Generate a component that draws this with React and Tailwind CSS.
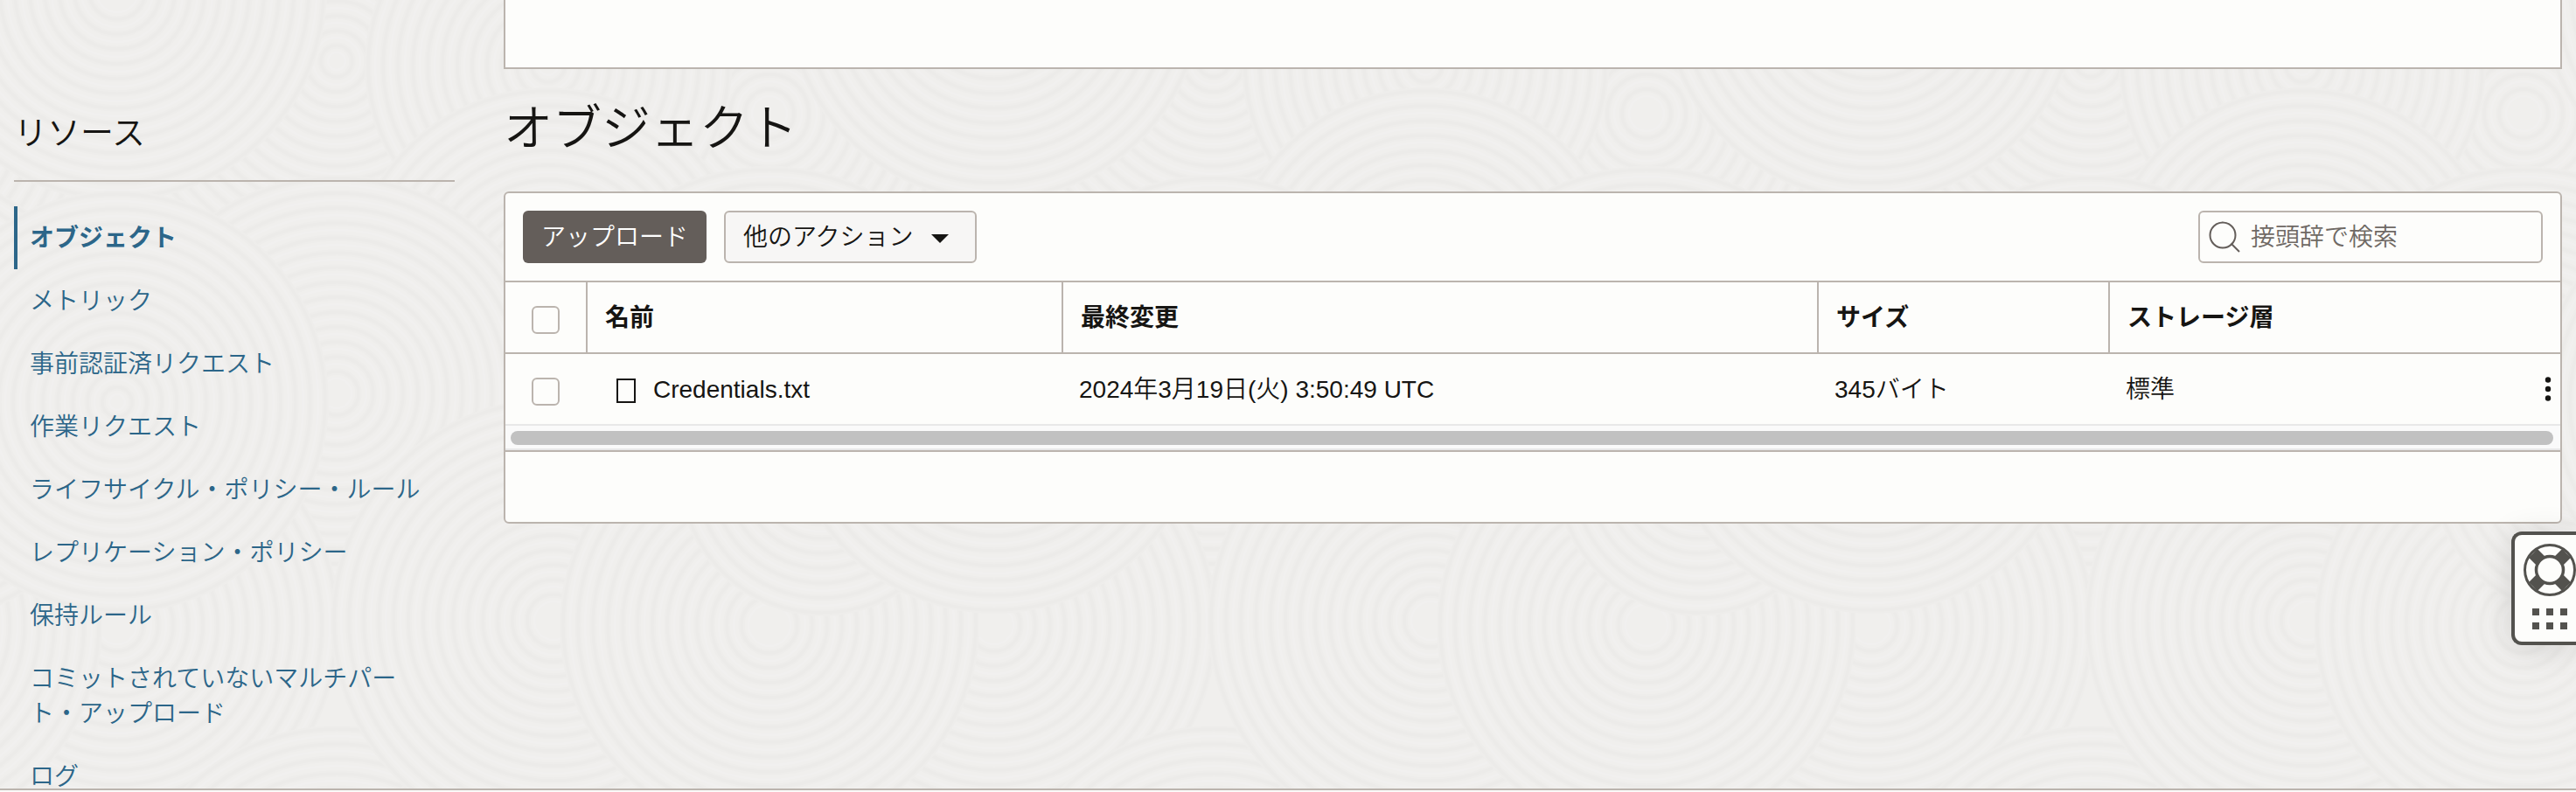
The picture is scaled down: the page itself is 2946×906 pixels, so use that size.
import React from "react";

const TILE = 1003;
const PITCH = 17;

// Discs of the sand-garden texture, painted in order: [cx, cy, radius]
const DISCS = [
  [385, 70, 260],
  [880, 130, 270],
  [627, 75, 210],
  [134, -10, 240],
  [627, 330, 230],
  [880, 450, 260],
  [385, 450, 250],
  [134, 715, 255],
  [385, 1080, 250],
  [633, 1080, 250],
  [134, 1110, 200],
  [633, 710, 255],
  [880, 715, 240],
  [940, 540, 165],
  [134, 460, 242],
  [880, 1110, 190],
];

function Rings({ cx, cy, r }) {
  const radii = [];
  for (let i = r - 4; i > 16; i -= PITCH) radii.push(i);
  return (
    <g>
      <circle cx={cx} cy={cy} r={r} fill="#f0efed" />
      {radii.map((n) => (
        <g key={n} fill="none">
          <circle cx={cx} cy={cy} r={n} stroke="#eeedeb" strokeWidth="7" />
          <circle cx={cx} cy={cy} r={n} stroke="#ecebe9" strokeWidth="3" />
          <circle cx={cx} cy={cy} r={n - 8} stroke="#f1f0ef" strokeWidth="3" />
        </g>
      ))}
    </g>
  );
}

function Texture() {
  return (
    <svg className="absolute inset-0 -z-10 h-full w-full" aria-hidden="true">
      <defs>
        <pattern id="sand" width={TILE} height="920" patternUnits="userSpaceOnUse">
          <rect width={TILE} height="920" fill="#f0efed" />
          {DISCS.map(([cx, cy, r]) =>
            [-TILE, 0, TILE].map((dx) => <Rings key={`${cx}-${cy}-${dx}`} cx={cx + dx} cy={cy} r={r} />)
          )}
        </pattern>
      </defs>
      <rect width="100%" height="100%" fill="url(#sand)" />
    </svg>
  );
}

const LINKS = [
  "オブジェクト",
  "メトリック",
  "事前認証済リクエスト",
  "作業リクエスト",
  "ライフサイクル・ポリシー・ルール",
  "レプリケーション・ポリシー",
  "保持ルール",
  "コミットされていないマルチパート・アップロード",
  "ログ",
];

function Sidebar() {
  return (
    <nav aria-label="リソース" className="w-[504px] shrink-0 pt-[124px]">
      <h2 className="border-b-2 border-[#bbb4ae] pb-[26px] text-[38px] leading-[56px] text-[#161513]">リソース</h2>
      <ul className="mt-7">
        {LINKS.map((label, i) => (
          <li key={label}>
            <a
              href="#"
              aria-current={i === 0 ? "page" : undefined}
              className={
                i === 0
                  ? "block border-l-4 border-[#2c6689] pt-[17px] pr-8 pb-[15px] pl-[14px] font-bold text-[#2c6689]"
                  : "block border-l-4 border-transparent pt-[17px] pr-8 pb-[15px] pl-[14px] text-[#2c6689]"
              }
            >
              {label}
            </a>
          </li>
        ))}
      </ul>
    </nav>
  );
}

function Check({ label }) {
  return (
    <input
      type="checkbox"
      aria-label={label}
      className="mt-[6px] block size-8 appearance-none rounded-md border-2 border-[#bbb4ae] bg-[#fdfdfb]"
    />
  );
}

function Toolbar() {
  return (
    <div className="flex items-center justify-between border-b-2 border-[#bbb4ae] p-5">
      <div className="flex gap-5">
        <button type="button" className="h-[60px] rounded-md bg-[#645e5a] px-[21px] pt-0.5 text-white">
          アップロード
        </button>
        <button
          type="button"
          aria-haspopup="menu"
          className="flex h-[60px] items-center gap-5 rounded-md border-2 border-[#bbb4ae] bg-[#f7f6f5] pt-0.5 pr-[30px] pl-5"
        >
          他のアクション
          <svg width="20" height="10" viewBox="0 0 20 10" className="mt-0.5" aria-hidden="true">
            <path d="M0 0h20L10 10z" fill="#161513" />
          </svg>
        </button>
      </div>
      <label className="flex h-[60px] w-[394px] items-center gap-2.5 rounded-md border-2 border-[#bbb4ae] pr-4 pl-2.5">
        <svg width="38" height="38" viewBox="0 0 38 38" fill="none" stroke="#645e5a" strokeWidth="2" aria-hidden="true">
          <circle cx="16" cy="17" r="14.500" />
          <path d="M25.500 26.500l9.500 9.500" />
        </svg>
        <input
          type="text"
          aria-label="接頭辞で検索"
          placeholder="接頭辞で検索"
          className="min-w-0 flex-1 bg-transparent pt-0.5 outline-none placeholder:text-[#6f6964]"
        />
      </label>
    </div>
  );
}

function ObjectTable() {
  const head = "h-[82px] border-b-2 border-l-2 border-[#bbb4ae] pt-0.5 pl-5 text-left font-bold";
  const cell = "h-20 pt-0.5 pl-5";
  return (
    <table className="w-full table-fixed border-separate border-spacing-0">
      <colgroup>
        <col className="w-[92px]" />
        <col className="w-[544px]" />
        <col className="w-[864px]" />
        <col className="w-[333px]" />
        <col />
        <col className="w-[60px]" />
      </colgroup>
      <thead>
        <tr>
          <th className="border-b-2 border-[#bbb4ae] pl-[30px]">
            <Check label="すべて選択" />
          </th>
          <th className={head}>名前</th>
          <th className={head}>最終変更</th>
          <th className={head}>サイズ</th>
          <th className={head}>ストレージ層</th>
          <td className="border-b-2 border-[#bbb4ae]" />
        </tr>
      </thead>
      <tbody>
        <tr>
          <td className="pl-[30px]">
            <Check label="Credentials.txt を選択" />
          </td>
          <td className={cell}>
            <div className="flex items-center gap-5 pl-[15px]">
              <svg width="22" height="28" viewBox="0 0 22 28" className="mt-0.5" aria-hidden="true">
                <rect x="1" y="1" width="20" height="26" fill="none" stroke="#161513" strokeWidth="2" />
              </svg>
              Credentials.txt
            </div>
          </td>
          <td className={cell}>2024年3月19日(火) 3:50:49 UTC</td>
          <td className={cell}>345バイト</td>
          <td className={cell}>標準</td>
          <td className="h-20 pr-2.5">
            <button type="button" aria-label="アクション" className="ml-auto block">
              <svg width="8" height="28" viewBox="0 0 8 28" fill="#161513" aria-hidden="true">
                <circle cx="4" cy="3.500" r="3.200" />
                <circle cx="4" cy="14" r="3.200" />
                <circle cx="4" cy="24.500" r="3.200" />
              </svg>
            </button>
          </td>
        </tr>
      </tbody>
    </table>
  );
}

function HelpWidget() {
  return (
    <button
      type="button"
      aria-label="ヘルプ"
      className="absolute top-[608px] right-0 flex h-[130px] w-[74px] flex-col items-center gap-[14px] rounded-l-xl border-4 border-r-0 border-[#53524e] bg-[#fdfdfb] pt-[10px] pl-[10px] shadow-[0_4px_36px_rgba(0,0,0,0.12)]"
    >
      <svg width="60" height="60" viewBox="0 0 60 60" className="shrink-0" aria-hidden="true">
        <g fill="none" stroke="#53524e">
          <circle cx="30" cy="30" r="28.500" strokeWidth="3" />
          <circle cx="30" cy="30" r="15.500" strokeWidth="3.500" />
          <g strokeWidth="14">
            <path d="M11 11L19.500 19.500M49 11L40.500 19.500M11 49L19.500 40.500M49 49L40.500 40.500" />
          </g>
        </g>
      </svg>
      <svg width="40" height="24" viewBox="0 0 40 24" fill="#53524e" className="shrink-0" aria-hidden="true">
        <path d="M0 0h8v8H0zM16 0h8v8h-8zM32 0h8v8h-8zM0 16h8v8H0zM16 16h8v8h-8zM32 16h8v8h-8z" />
      </svg>
    </button>
  );
}

export default function App() {
  return (
    <div
      lang="ja"
      className="flex h-screen flex-col overflow-hidden bg-[#fbf9f8] font-['Liberation_Sans','Noto_Sans_CJK_JP',sans-serif] text-[28px] leading-10 font-[350] text-[#161513]"
    >
      <div className="relative isolate min-h-0 flex-1 overflow-hidden">
        <Texture />
        <div className="flex gap-14 px-4">
          <Sidebar />
          <main className="min-w-0 flex-1">
            <div className="h-[79px] border-2 border-t-0 border-[#bbb4ae] bg-[#fdfdfb]" />
            <h1 className="mt-7 text-[56px] leading-[80px]">オブジェクト</h1>
            <section className="mt-8 rounded-md border-2 border-[#bbb4ae] bg-[#fdfdfb]">
              <Toolbar />
              <ObjectTable />
              <div className="border-y-2 border-[#e8e8e8] bg-[#fafafa] pt-1.5 pr-2 pb-1 pl-1.5">
                <div className="h-4 rounded-full bg-[#c1c1c1]" />
              </div>
              <div className="h-[82px] border-t-2 border-[#bbb4ae]" />
            </section>
          </main>
        </div>
        <HelpWidget />
      </div>
      <footer className="h-1 shrink-0 border-t-2 border-[#bbb4ae]" />
    </div>
  );
}
